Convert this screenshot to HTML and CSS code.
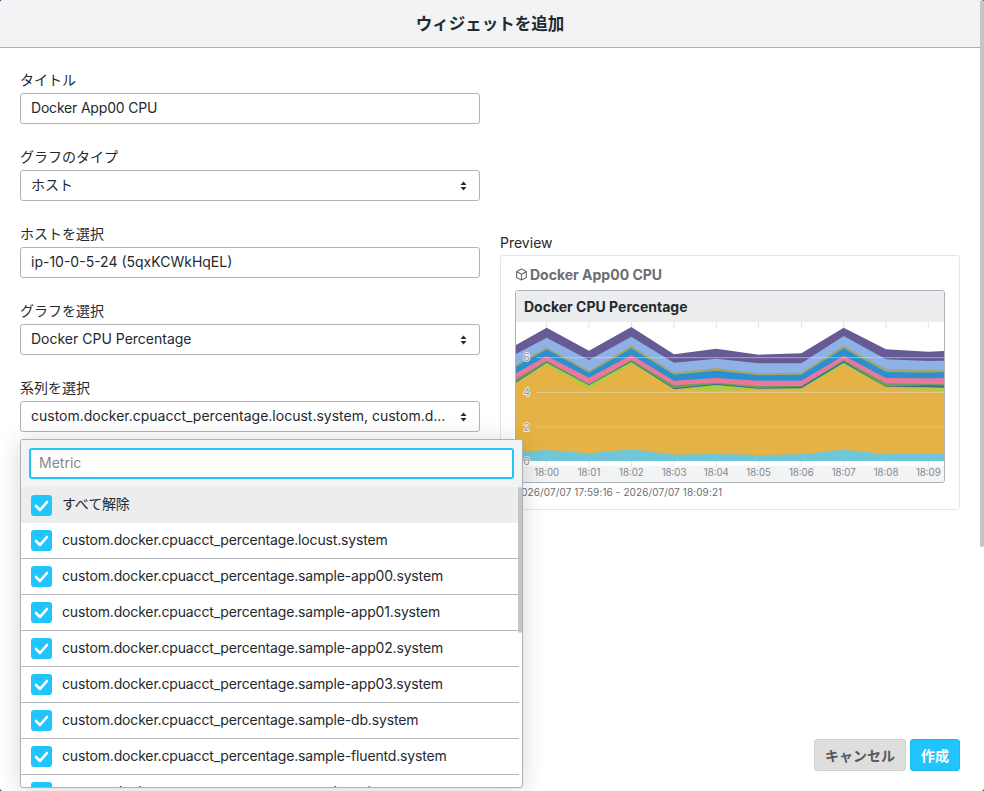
FILE: index.html
```html
<!DOCTYPE html>
<html lang="ja">
<head>
<meta charset="utf-8">
<title>ウィジェットを追加</title>
<link rel="stylesheet" href="styles.css">
</head>
<body>
<div class="modal">
  <header class="modal-head">ウィジェットを追加</header>
  <div class="modal-body">
    <form class="form-col">
      <div class="field">
        <label class="field-label">タイトル</label>
        <div class="control control-title">Docker App00 CPU</div>
      </div>
      <div class="field">
        <label class="field-label">グラフのタイプ</label>
        <div class="control select"><span class="select-value">ホスト</span><svg class="updown" viewBox="0 0 7 10"><path d="M3.500 0.500 6.500 4H.500zM3.500 9.500.500 6h6z"/></svg></div>
      </div>
      <div class="field">
        <label class="field-label">ホストを選択</label>
        <div class="control">ip-10-0-5-24 (5qxKCWkHqEL)</div>
      </div>
      <div class="field">
        <label class="field-label">グラフを選択</label>
        <div class="control select"><span class="select-value">Docker CPU Percentage</span><svg class="updown" viewBox="0 0 7 10"><path d="M3.500 0.500 6.500 4H.500zM3.500 9.500.500 6h6z"/></svg></div>
      </div>
      <div class="field dropdown-anchor">
        <label class="field-label">系列を選択</label>
        <div class="control select"><span class="select-value">custom.docker.cpuacct_percentage.locust.system, custom.d...</span><svg class="updown" viewBox="0 0 7 10"><path d="M3.500 0.500 6.500 4H.500zM3.500 9.500.500 6h6z"/></svg></div>
        <div class="dropdown">
          <div class="dropdown-search"><div class="search-input">Metric</div></div>
          <ul class="option-list">
            <li class="option option-all"><svg class="check" viewBox="0 0 21 21"><rect width="21" height="21" rx="3"/><path d="M5 11l4 4 7-8"/></svg><span class="option-text">すべて解除</span></li>
            <li class="option"><svg class="check" viewBox="0 0 21 21"><rect width="21" height="21" rx="3"/><path d="M5 11l4 4 7-8"/></svg><span class="option-text">custom.docker.cpuacct_percentage.locust.system</span></li>
            <li class="option"><svg class="check" viewBox="0 0 21 21"><rect width="21" height="21" rx="3"/><path d="M5 11l4 4 7-8"/></svg><span class="option-text">custom.docker.cpuacct_percentage.sample-app00.system</span></li>
            <li class="option"><svg class="check" viewBox="0 0 21 21"><rect width="21" height="21" rx="3"/><path d="M5 11l4 4 7-8"/></svg><span class="option-text">custom.docker.cpuacct_percentage.sample-app01.system</span></li>
            <li class="option"><svg class="check" viewBox="0 0 21 21"><rect width="21" height="21" rx="3"/><path d="M5 11l4 4 7-8"/></svg><span class="option-text">custom.docker.cpuacct_percentage.sample-app02.system</span></li>
            <li class="option"><svg class="check" viewBox="0 0 21 21"><rect width="21" height="21" rx="3"/><path d="M5 11l4 4 7-8"/></svg><span class="option-text">custom.docker.cpuacct_percentage.sample-app03.system</span></li>
            <li class="option"><svg class="check" viewBox="0 0 21 21"><rect width="21" height="21" rx="3"/><path d="M5 11l4 4 7-8"/></svg><span class="option-text">custom.docker.cpuacct_percentage.sample-db.system</span></li>
            <li class="option"><svg class="check" viewBox="0 0 21 21"><rect width="21" height="21" rx="3"/><path d="M5 11l4 4 7-8"/></svg><span class="option-text">custom.docker.cpuacct_percentage.sample-fluentd.system</span></li>
            <li class="option"><svg class="check" viewBox="0 0 21 21"><rect width="21" height="21" rx="3"/><path d="M5 11l4 4 7-8"/></svg><span class="option-text">custom.docker.cpuacct_percentage.sample-nginx.system</span></li>
          </ul>
          <div class="list-scroll"></div>
        </div>
      </div>
    </form>
    <section class="preview-col">
      <div class="preview-label">Preview</div>
      <div class="preview-card">
        <div class="widget-title">
          <svg class="cube" viewBox="0 0 16 16"><path d="M8 1.200 14 4.400V11.600L8 14.800 2 11.600V4.400zM2.300 4.600 8 7.800l5.700-3.200M8 7.800v6.800"/></svg>
          <span>Docker App00 CPU</span>
        </div>
        <div class="graph">
          <div class="graph-title">Docker CPU Percentage</div>
          <svg class="graph-plot" viewBox="48 276 1284 480" preserveAspectRatio="none">
            <rect class="axis-band" x="48" y="708" width="1284" height="48"/>
            <path class="tick" d="M140 276v20M267 276v20M394 276v20M522 276v20M649 276v20M776 276v20M904 276v20M1031 276v20M1158 276v20M1285 276v20"/>
            <path class="tick" d="M140 693v15M267 693v15M394 693v15M522 693v15M649 693v15M776 693v15M904 693v15M1031 693v15M1158 693v15M1285 693v15"/>
            <polygon class="s-purple" points="48,345 140,293 267,362 394,291 522,373 649,356 776,374 904,370 1031,293 1158,358 1285,365 1332,363 1332,693 48,693"/>
            <polygon class="s-lightblue" points="48,372 140,323 267,390 394,320 522,398 649,386 776,400 904,400 1031,318 1158,388 1285,393 1332,392 1332,693 48,693"/>
            <polygon class="s-olive" points="48,405 140,352 267,422 394,347 522,428 649,414 776,430 904,428 1031,347 1158,418 1285,420 1332,420 1332,693 48,693"/>
            <polygon class="s-blue" points="48,410 140,358 267,428 394,355 522,434 649,422 776,436 904,434 1031,355 1158,426 1285,428 1332,426 1332,693 48,693"/>
            <polygon class="s-pink" points="48,430 140,378 267,443 394,375 522,452 649,444 776,452 904,452 1031,377 1158,444 1285,445 1332,444 1332,693 48,693"/>
            <polygon class="s-green" points="48,446 140,392 267,462 394,390 522,466 649,458 776,468 904,468 1031,390 1158,460 1285,462 1332,462 1332,693 48,693"/>
            <polygon class="s-navy" points="48,455 140,396 267,464 394,394 522,475 649,462 776,474 904,470 1031,394 1158,470 1285,466 1332,467 1332,693 48,693"/>
            <polygon class="s-lime" points="48,458 140,398 267,466 394,396 522,478 649,465 776,476 904,475 1031,398 1158,471 1285,472 1332,473 1332,693 48,693"/>
            <polygon class="s-orange" points="48,460 140,405 267,478 394,403 522,478 649,482 776,478 904,478 1031,406 1158,472 1285,480 1332,484 1332,693 48,693"/>
            <polygon class="s-cyan" points="48,667 140,660 267,670 394,658 522,674 649,672 776,675 904,673 1031,659 1158,673 1285,670 1332,672 1332,693 48,693"/>
            <path class="grid-solid" d="M110 383H1332M110 487H1332"/>
            <path class="grid-dot" d="M110 591H1332"/>
            <g class="y-labels">
              <text x="80" y="394">6</text>
              <text x="80" y="498">4</text>
              <text x="80" y="602">2</text>
              <text x="80" y="705">0</text>
            </g>
            <g class="x-labels">
              <text x="140" y="738">18:00</text>
              <text x="267" y="738">18:01</text>
              <text x="394" y="738">18:02</text>
              <text x="522" y="738">18:03</text>
              <text x="649" y="738">18:04</text>
              <text x="776" y="738">18:05</text>
              <text x="904" y="738">18:06</text>
              <text x="1031" y="738">18:07</text>
              <text x="1158" y="738">18:08</text>
              <text x="1285" y="738">18:09</text>
            </g>
          </svg>
        </div>
        <div class="graph-range">2026/07/07 17:59:16 - 2026/07/07 18:09:21</div>
      </div>
    </section>
  </div>
  <footer class="modal-foot">
    <button class="btn btn-cancel" type="button">キャンセル</button>
    <button class="btn btn-primary" type="button">作成</button>
  </footer>
  <div class="page-scroll"></div>
</div>
</body>
</html>
```
FILE: styles.css
```css
* { box-sizing: border-box; }
html, body { margin: 0; height: 100%; overflow: hidden; }
body {
  background: #2b3a4a;
  font-family: Inter, "Noto Sans CJK JP", sans-serif;
  font-size: 14px;
  color: #24292e;
}
.modal {
  position: relative;
  height: 791px;
  width: 984px;
  background: #fff;
  border-radius: 3px;
  display: flex;
  flex-direction: column;
  overflow: hidden;
}
.modal-head {
  height: 48px;
  flex: none;
  background: #f1f3f5;
  border-bottom: 1px solid #adb0b5;
  display: flex;
  align-items: center;
  justify-content: center;
  font-size: 16.500px;
  font-weight: 700;
  padding: 0 4px 2px 0;
}
.modal-body {
  flex: 1;
  display: flex;
  gap: 20px;
  padding: 20px 24px 0 20px;
  min-height: 0;
}
.form-col { width: 460px; flex: none; }
.field { height: 77px; }
.field-label { display: block; height: 25px; line-height: 23px; }
.control {
  height: 31px;
  border: 1px solid #b0b3b8;
  border-radius: 3px;
  background: #fff;
  padding: 0 10px 2px;
  display: flex;
  align-items: center;
  line-height: 20px;
}
.control-title { letter-spacing: -.19px; }
.select { justify-content: space-between; padding-right: 12px; }
.select-value { white-space: nowrap; }
.updown { width: 7px; height: 10px; flex: none; fill: #24292e; margin-top: 2px; }
.dropdown-anchor { position: relative; }
.dropdown {
  position: absolute;
  top: 63px;
  left: 0;
  width: 503px;
  height: 349px;
  background: #fff;
  border: 1px solid #adb0b5;
  border-radius: 3px;
  box-shadow: 0 2px 24px rgba(0, 0, 0, .16);
  overflow: hidden;
  z-index: 5;
}
.dropdown-search { background: #f1f3f5; height: 47px; padding: 8px; }
.search-input {
  height: 31px;
  border: 2px solid #21c5fb;
  border-radius: 3px;
  background: #fff;
  padding: 0 8px 3px;
  display: flex;
  align-items: center;
  color: #85888c;
}
.option-list { list-style: none; margin: 0; padding: 0; }
.option {
  height: 36px;
  flex: none;
  display: flex;
  align-items: center;
  gap: 10px;
  padding-left: 10px;
  margin-right: 3px;
  border-bottom: 1px solid #b6b9be;
  white-space: nowrap;
}
.option-all { background: #ecedef; border-bottom: 0; }
.option-text { letter-spacing: -.16px; margin-bottom: 2px; line-height: 20px; }
.check { width: 21px; height: 21px; flex: none; fill: #21c5fb; }
.check path { fill: none; stroke: #fff; stroke-width: 2.600; stroke-linecap: round; stroke-linejoin: round; }
.list-scroll {
  position: absolute;
  right: 0;
  top: 47px;
  width: 4px;
  height: 146px;
  background: #c4c5c7;
  border-radius: 2px;
}
.preview-col { width: 460px; flex: none; margin-top: 167px; }
.preview-label { height: 20px; line-height: 15px; }
.preview-card {
  height: 255px;
  border: 1px solid #e4e6e8;
  border-radius: 3px;
  padding: 6px 14px 0;
}
.widget-title {
  height: 24px;
  margin-bottom: 4px;
  display: flex;
  align-items: center;
  gap: 2px;
  font-weight: 700;
  color: #6b6e72;
}
.cube { width: 13px; height: 13px; flex: none; fill: none; stroke: #6b6e72; stroke-width: 1.400; stroke-linejoin: round; }
.graph {
  height: 193px;
  border: 1px solid #adb0b5;
  border-radius: 3px;
  overflow: hidden;
  background: #fff;
}
.graph-title {
  height: 31px;
  background: #ecedef;
  padding: 0 8px;
  display: flex;
  align-items: center;
  font-weight: 700;
}
.graph-plot { display: block; width: 428px; height: 160px; }
.axis-band { fill: #f1f3f5; }
.tick { stroke: #e3e4e6; stroke-width: 3; fill: none; }
.s-purple { fill: #675b96; }
.s-lightblue { fill: #8eb1e6; }
.s-olive { fill: #a3a66c; }
.s-blue { fill: #2a90cf; }
.s-pink { fill: #e9789a; }
.s-green { fill: #6f9e56; }
.s-navy { fill: #3f64a8; }
.s-lime { fill: #a8cf3f; }
.s-orange { fill: #e5b345; }
.s-cyan { fill: #70c7d9; }
.grid-solid { stroke: rgba(225, 225, 225, .55); stroke-width: 3; fill: none; }
.grid-dot { stroke: rgba(225, 225, 225, .6); stroke-width: 3; stroke-dasharray: 3 3; fill: none; }
.y-labels text {
  font-size: 30px;
  fill: #8a8d91;
  stroke: #fff;
  stroke-width: 4px;
  paint-order: stroke;
  text-anchor: middle;
}
.x-labels text { font-size: 29px; fill: #85888c; text-anchor: middle; }
.graph-range { font-size: 10px; color: #6b6e72; margin-top: 3px; line-height: 12px; letter-spacing: .1px; }
.modal-foot {
  flex: none;
  height: 52px;
  padding-right: 24px;
  display: flex;
  justify-content: flex-end;
  align-items: flex-start;
  gap: 4px;
}
.btn {
  height: 32px;
  border-radius: 3px;
  font-family: inherit;
  font-size: 14px;
  font-weight: 700;
  padding: 0 10px;
  display: flex;
  align-items: center;
}
.btn-cancel { background: #dedede; border: 1px solid #d0d0d0; color: #55585c; }
.btn-primary { background: #21c5fb; border: 1px solid #1cb8ec; color: #fff; }
.page-scroll {
  position: absolute;
  right: 0;
  top: 0;
  width: 4px;
  height: 547px;
  background: #c4c5c7;
  border-radius: 2px;
}
```
